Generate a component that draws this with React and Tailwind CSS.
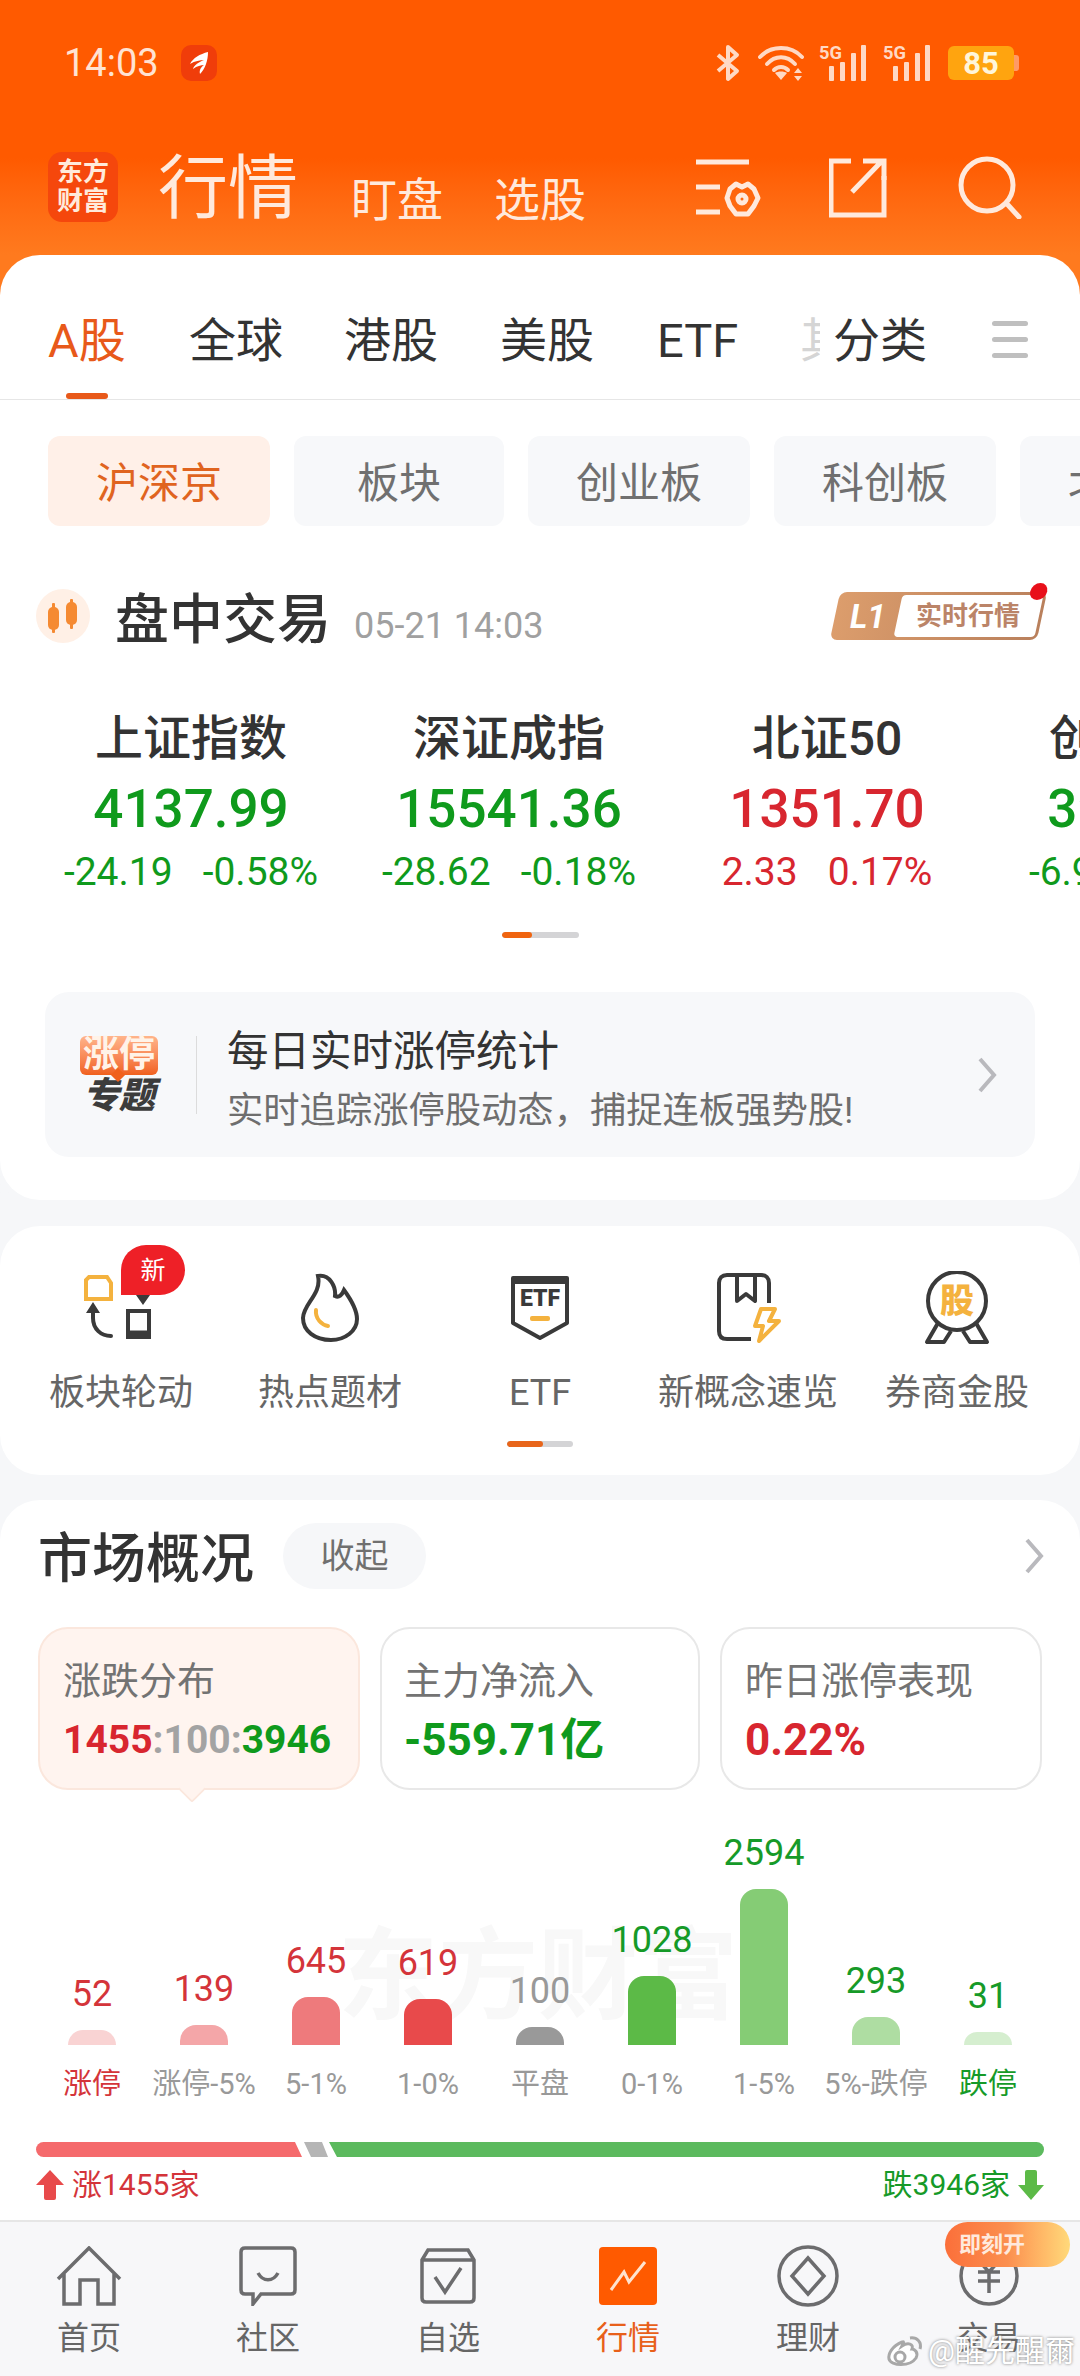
const font = 'font-["Roboto","Noto_Sans_CJK_SC",sans-serif]';

const tabs = [
  { label: 'A股', active: true, w: 'w-[141px]' },
  { label: '全球', w: 'w-[155px]' },
  { label: '港股', w: 'w-[156px]' },
  { label: '美股', w: 'w-[157px]' },
  { label: 'ETF', w: 'w-[143px]' },
];

const chips = [
  { label: '沪深京', active: true, w: 'w-[222px]' },
  { label: '板块', w: 'w-[210px]' },
  { label: '创业板', w: 'w-[222px]' },
  { label: '科创板', w: 'w-[222px]' },
  { label: '北交所', w: 'w-[222px]' },
];

const indexes = [
  { name: '上证指数', value: '4137.99', change: '-24.19', pct: '-0.58%', up: false },
  { name: '深证成指', value: '15541.36', change: '-28.62', pct: '-0.18%', up: false },
  { name: '北证50', value: '1351.70', change: '2.33', pct: '0.17%', up: true },
  { name: '创业板指', value: '3921.47', change: '-6.98', pct: '-0.18%', up: false },
];

const bars = [
  { value: '52', label: '涨停', h: 'h-[15px]', bar: 'bg-[#f9d3d3]', text: 'text-[#d4343a]', labelText: 'text-[#d4343a]' },
  { value: '139', label: '涨停-5%', h: 'h-[20px]', bar: 'bg-[#f4a6a8]', text: 'text-[#d4343a]', labelText: 'text-[#999999]' },
  { value: '645', label: '5-1%', h: 'h-[48px]', bar: 'bg-[#ee7a7c]', text: 'text-[#d4343a]', labelText: 'text-[#999999]' },
  { value: '619', label: '1-0%', h: 'h-[46px]', bar: 'bg-[#e84a4b]', text: 'text-[#d4343a]', labelText: 'text-[#999999]' },
  { value: '100', label: '平盘', h: 'h-[18px]', bar: 'bg-[#999999]', text: 'text-[#999999]', labelText: 'text-[#999999]' },
  { value: '1028', label: '0-1%', h: 'h-[69px]', bar: 'bg-[#5cba47]', text: 'text-[#169a28]', labelText: 'text-[#999999]' },
  { value: '2594', label: '1-5%', h: 'h-[156px]', bar: 'bg-[#85cc75]', text: 'text-[#169a28]', labelText: 'text-[#999999]' },
  { value: '293', label: '5%-跌停', h: 'h-[28px]', bar: 'bg-[#aedda2]', text: 'text-[#169a28]', labelText: 'text-[#999999]' },
  { value: '31', label: '跌停', h: 'h-[13px]', bar: 'bg-[#d5eecf]', text: 'text-[#169a28]', labelText: 'text-[#169a28]' },
];

function StatusBar() {
  return (
    <div className="flex h-[126px] items-center pl-[64px] pr-[66px] text-[#ffe3d2]">
      <span className="text-[38px] leading-none">14:03</span>
      <div className="ml-[22px] flex h-[36px] w-[36px] items-center justify-center rounded-[10px] bg-[#f03d0a]">
        <svg width="22" height="24" viewBox="0 0 22 24" fill="#fff">
          <path d="M20 1 C12 3 5 7 2 13 C7 10 12 9 16 9 C11 11 6 14 5 18 C9 15 13 14 16 14 C13 16 11 19 12 23 C17 18 20 10 20 1Z" />
        </svg>
      </div>
      <div className="ml-auto flex items-center">
        <svg width="26" height="38" viewBox="0 0 26 38" fill="none" stroke="#ffd9c4" strokeWidth="4" strokeLinejoin="round">
          <path d="M3 11 L22 27 L13 35 V3 L22 11 L3 27" />
        </svg>
        <svg className="ml-[16px]" width="50" height="38" viewBox="0 0 50 38" fill="none" stroke="#ffd9c4" strokeWidth="4" strokeLinecap="round">
          <path d="M3 13 C14 1 34 1 45 13" />
          <path d="M10 20 C18 11 30 11 38 20" />
          <path d="M17 26 C21 22 27 22 31 26" />
          <path d="M24 36 L18 29 C21 27 27 27 30 29Z" fill="#ffd9c4" stroke="none" />
          <path d="M41 24 L45 29 H37Z M37 32 H45 L41 37Z" fill="#ffd9c4" stroke="none" />
        </svg>
        <Signal className="ml-[12px]" />
        <Signal className="ml-[16px]" />
        <div className="relative ml-[17px] flex h-[34px] w-[66px] items-center justify-center rounded-[6px] bg-[#ffa40f] text-[31px] font-bold leading-none text-[#fff6d9]">
          85
          <div className="absolute right-[-5px] top-[9px] h-[16px] w-[5px] rounded-r-[3px] bg-[#ff9a66]" />
        </div>
      </div>
    </div>
  );
}

function Signal({ className }) {
  return (
    <svg className={className} width="48" height="38" viewBox="0 0 48 38" fill="#ffd9c4">
      <text x="0" y="15" fontSize="18" fontWeight="700" fontFamily="Roboto" textLength="23" lengthAdjust="spacingAndGlyphs">5G</text>
      <rect x="10" y="22" width="5" height="15" rx="1" />
      <rect x="21" y="18" width="5" height="19" rx="1" />
      <rect x="32" y="9" width="5" height="28" rx="1" />
      <rect x="42" y="1" width="5" height="36" rx="1" />
    </svg>
  );
}

function TopBar() {
  return (
    <div className="flex h-[129px] items-start pl-[48px] pr-[58px] pt-[26px] text-[#ffe9dc]">
      <div className="flex h-[70px] w-[70px] flex-col items-center justify-center rounded-[14px] bg-[#f5470c] text-[26px] font-bold leading-[29px] text-[#ffeadb]">
        <span>东方</span>
        <span>财富</span>
      </div>
      <span className="ml-[40px] mt-[-5px] text-[70px] leading-[84px]">行情</span>
      <span className="ml-[53px] mt-[17px] text-[46px] leading-[62px]">盯盘</span>
      <span className="ml-[51px] mt-[17px] text-[46px] leading-[62px]">选股</span>
      <div className="ml-auto flex items-start">
        <svg width="66" height="60" viewBox="0 0 66 60" fill="none" stroke="#ffe9dc" strokeWidth="5" className="mt-[6px]">
          <path d="M1 4 H54 M1 29 H25 M1 54 H25" />
          <path d="M47 29 L53 26 L59 31 L63 40 L59 48 L53 56 L47 56 L41 56 L35 48 L32 40 L35 31 L41 26Z" strokeLinejoin="round" />
          <circle cx="47" cy="41" r="4" />
        </svg>
        <svg width="58" height="60" viewBox="0 0 58 60" fill="none" stroke="#ffe9dc" strokeWidth="5" className="ml-[68px] mt-[6px]">
          <path d="M22 3 H2 V57 H55 V18" />
          <path d="M23 34 L52 4 M34 3 H55 V22" />
        </svg>
        <svg width="64" height="64" viewBox="0 0 64 64" fill="none" stroke="#ffe9dc" strokeWidth="5" className="ml-[71px] mt-[3px]">
          <circle cx="29" cy="30" r="26" />
          <path d="M50 50 L61 62" strokeLinecap="round" />
        </svg>
      </div>
    </div>
  );
}

function Chevron({ className }) {
  return (
    <svg className={className} width="20" height="36" viewBox="0 0 20 36" fill="none" stroke="#b9b9bd" strokeWidth="4">
      <path d="M3 2 L17 18 L3 34" />
    </svg>
  );
}

function MarketCard() {
  return (
    <div className="h-[945px] overflow-hidden rounded-[40px] bg-white">
      {/* Tabs */}
      <div className="relative flex h-[145px] border-b border-[#e6e6e6] pl-[48px] pt-[58px]">
        {tabs.map((t) => (
          <div key={t.label} className={`${t.w} relative shrink-0 text-[47px] leading-[56px] ${t.active ? 'text-[#e8591a]' : 'text-[#333333]'}`}>
            {t.label}
            {t.active && <div className="absolute left-[18px] top-[80px] h-[6px] w-[42px] rounded-full bg-[#e8591a]" />}
          </div>
        ))}
        <div className="mr-[13px] w-[20px] shrink-0 overflow-hidden whitespace-nowrap text-[47px] leading-[56px] text-[#d5d5d5]">其他</div>
        <div className="text-[47px] leading-[56px] text-[#333333]">分类</div>
        <div className="ml-[65px] mt-[8px] flex h-[37px] w-[36px] flex-col justify-between">
          <div className="h-[5px] rounded-full bg-[#bfbfbf]" />
          <div className="h-[5px] rounded-full bg-[#bfbfbf]" />
          <div className="h-[5px] rounded-full bg-[#bfbfbf]" />
        </div>
      </div>

      {/* Chips */}
      <div className="mt-[36px] flex gap-[24px] overflow-hidden pl-[48px]">
        {chips.map((c) => (
          <div key={c.label} className={`${c.w} flex h-[90px] shrink-0 items-center justify-center rounded-[12px] pt-[5px] text-[42px] ${c.active ? 'bg-[#fff0e8] text-[#e0641f]' : 'bg-[#f7f8fa] text-[#707070]'}`}>
            {c.label}
          </div>
        ))}
      </div>

      {/* Heading */}
      <div className="mt-[64px] flex h-[52px] items-center pl-[36px] pr-[38px]">
        <div className="flex h-[54px] w-[54px] items-center justify-center rounded-full bg-[#fff0e6]">
          <svg width="30" height="34" viewBox="0 0 30 34" fill="#f58a32">
            <rect x="0" y="8" width="11" height="23" rx="5" />
            <rect x="4" y="4" width="3" height="30" rx="1" />
            <rect x="18" y="3" width="11" height="23" rx="5" />
            <rect x="22" y="0" width="3" height="30" rx="1" />
          </svg>
        </div>
        <span className="ml-[25px] mt-[10px] text-[54px] font-medium leading-none text-[#333333]">盘中交易</span>
        <span className="ml-[23px] mt-[20px] text-[36px] leading-none text-[#a0a0a0]">05-21 14:03</span>
        <div className="relative ml-auto flex h-[48px] w-[207px] -skew-x-12 items-center rounded-[7px] bg-gradient-to-r from-[#dc9d6c] to-[#b9805c] p-[3px]">
          <span className="w-[60px] skew-x-12 text-center text-[33px] font-bold italic leading-none text-white">L1</span>
          <span className="flex h-[42px] flex-1 items-center justify-center rounded-[4px] bg-white">
            <span className="skew-x-12 text-[26px] font-bold leading-none text-[#bb8468]">实时行情</span>
          </span>
          <div className="absolute right-[0px] top-[-9px] h-[17px] w-[17px] rounded-full bg-[#e8101a]" />
        </div>
      </div>

      {/* Indexes */}
      <div className="mt-[69px] flex overflow-hidden pl-[32px]">
        {indexes.map((x) => {
          const color = x.up ? 'text-[#d8262f]' : 'text-[#0f9a1c]';
          return (
            <div key={x.name} className="flex w-[318px] shrink-0 flex-col items-center">
              <span className="text-[48px] font-medium leading-[56px] text-[#333333]">{x.name}</span>
              <span className={`mt-[12px] text-[53px] font-medium leading-[60px] ${color}`}>{x.value}</span>
              <div className={`mt-[11px] flex gap-[30px] text-[39px] leading-[44px] ${color}`}>
                <span>{x.change}</span>
                <span>{x.pct}</span>
              </div>
            </div>
          );
        })}
      </div>
      <div className="mx-auto mt-[38px] h-[6px] w-[77px] overflow-hidden rounded-full bg-[#d4d4d6]">
        <div className="h-full w-[30px] rounded-full bg-[#f0640f]" />
      </div>

      {/* Limit-up banner */}
      <div className="mx-[45px] mt-[54px] flex h-[165px] items-center rounded-[24px] bg-[#f7f8fa] pl-[35px] pr-[38px]">
        <div className="flex w-[78px] flex-col items-center">
          <div className="relative h-[39px] w-[78px] rounded-[6px] bg-gradient-to-b from-[#ffb48a] to-[#f0601c] text-center text-[36px] font-bold leading-[39px] text-[#fff3e8]">
            涨停
            <div className="absolute bottom-[-5px] left-[33px] h-[10px] w-[10px] rotate-45 bg-[#f0601c]" />
          </div>
          <div className="mt-[4px] text-[36px] font-black italic leading-[34px] text-[#3c3c3c]">专题</div>
        </div>
        <div className="ml-[38px] h-[78px] w-[1px] bg-[#dcdcdc]" />
        <div className="ml-[30px] flex flex-col pt-[12px]">
          <span className="text-[41.5px] leading-[50px] text-[#333333]">每日实时涨停统计</span>
          <span className="mt-[11px] text-[36.3px] leading-[46px] text-[#6e6e6e]">实时追踪涨停股动态，捕捉连板强势股!</span>
        </div>
        <Chevron className="ml-auto" />
      </div>
    </div>
  );
}

function ToolCard() {
  return (
    <div className="mt-[26px] h-[249px] rounded-[40px] bg-white pt-[40px]">
      <div className="grid grid-cols-[242px_176px_244px_172px_246px]">
        <ToolItem label="板块轮动" badge>
          <svg width="80" height="70" viewBox="0 0 80 70" fill="none" strokeWidth="4">
            <path d="M8 4 H26 L30 10 V26 H5 V7Z" stroke="#f4b23e" />
            <path d="M47 38 H68 V64 H47Z" stroke="#3a3a3a" />
            <path d="M47 60 H68" stroke="#3a3a3a" strokeWidth="5" />
            <path d="M12 35 V45 C12 56 20 63 30 63" stroke="#3a3a3a" strokeLinecap="round" />
            <path d="M12 29 L5 40 H19Z M62 32 L55 22 H69Z" fill="#3a3a3a" />
          </svg>
        </ToolItem>
        <ToolItem label="热点题材">
          <svg width="60" height="70" viewBox="0 0 60 70" fill="none" strokeWidth="4" strokeLinecap="round">
            <path d="M18 3 C30 1 36 14 35 23 C39 25 42 22 44 17 C52 28 57 37 57 46 C57 58 45 67 31 67 C15 67 3 58 3 45 C3 31 22 21 18 3Z" stroke="#3a3a3a" />
            <path d="M16 37 C15 46 22 52 28 53" stroke="#f4b23e" />
          </svg>
        </ToolItem>
        <ToolItem label="ETF">
          <svg width="60" height="66" viewBox="0 0 60 66" fill="none" strokeWidth="4">
            <path d="M3 3 H57 V48 L30 63 L3 48Z" stroke="#3a3a3a" strokeLinejoin="round" />
            <path d="M3 7 H57" stroke="#3a3a3a" />
            <text x="30" y="31" textAnchor="middle" fontSize="23" fontWeight="900" fontFamily="Roboto" fill="#3a3a3a" stroke="none">ETF</text>
            <rect x="20" y="41" width="20" height="5" rx="2" fill="#f4b23e" stroke="none" />
          </svg>
        </ToolItem>
        <ToolItem label="新概念速览">
          <svg width="66" height="70" viewBox="0 0 66 70" fill="none" strokeWidth="4">
            <path d="M54 30 V10 C54 5 51 2 46 2 H12 C7 2 4 5 4 10 V58 C4 64 7 66 12 66 H36" stroke="#3a3a3a" />
            <path d="M22 2 V28 L31 21 L40 28 V2" stroke="#3a3a3a" strokeLinejoin="round" />
            <path d="M46 36 H60 L54 48 H64 L44 68 L48 53 H40Z" stroke="#f4b23e" strokeLinejoin="round" />
          </svg>
        </ToolItem>
        <ToolItem label="券商金股">
          <svg width="66" height="74" viewBox="0 0 66 74" fill="none" strokeWidth="4">
            <circle cx="33" cy="30" r="29" stroke="#3a3a3a" />
            <text x="33" y="42" textAnchor="middle" fontSize="34" fontWeight="900" fontFamily="Noto Sans CJK SC" fill="#f4b23e" stroke="none">股</text>
            <path d="M14 52 L3 71 H20 L27 60 M52 52 L63 71 H46 L39 60" stroke="#3a3a3a" strokeLinejoin="round" />
          </svg>
        </ToolItem>
      </div>
      <div className="mx-auto mt-[25px] h-[6px] w-[66px] overflow-hidden rounded-full bg-[#d4d4d6]">
        <div className="h-full w-[36px] rounded-full bg-[#e8651a]" />
      </div>
    </div>
  );
}

function ToolItem({ label, badge, children }) {
  return (
    <div className="flex flex-col items-center">
      <div className="relative flex h-[84px] w-full items-center justify-center">
        {children}
        {badge && (
          <div className="absolute left-[121px] top-[-21px] flex h-[50px] w-[64px] items-center justify-center rounded-t-[26px] rounded-br-[26px] bg-[#ee2027] text-[25px] leading-none text-white">
            新
          </div>
        )}
      </div>
      <span className="mt-[20px] whitespace-nowrap text-[36px] leading-[46px] text-[#666666]">{label}</span>
    </div>
  );
}

function OverviewCard() {
  return (
    <div className="relative mt-[25px] h-[720px] rounded-t-[40px] bg-white">
      <div className="flex h-[127px] items-start pl-[38px] pr-[36px] pt-[23px]">
        <span className="mt-[3px] text-[54px] font-medium leading-[68px] text-[#333333]">市场概况</span>
        <span className="ml-[29px] flex h-[66px] w-[143px] items-center justify-center rounded-full bg-[#f6f7f9] text-[34px] text-[#707070]">收起</span>
        <Chevron className="ml-auto mt-[15px]" />
      </div>

      <div className="flex gap-[20px] px-[38px]">
        <div className="relative h-[163px] w-[322px] rounded-[30px] border-2 border-[#fbe7dd] bg-[#fff4ef] pl-[23px] pt-[27px]">
          <div className="text-[38px] leading-[50px] text-[#737373]">涨跌分布</div>
          <div className="mt-[9px] text-[39px] font-bold leading-[50px]">
            <span className="text-[#d8262f]">1455</span>
            <span className="text-[#a3a3a3]">:100:</span>
            <span className="text-[#0f9a1c]">3946</span>
          </div>
          <div className="absolute bottom-[-11px] left-[142px] h-[20px] w-[20px] rotate-45 rounded-[3px] border-b-2 border-r-2 border-[#fbe7dd] bg-[#fff4ef]" />
        </div>
        <div className="h-[163px] w-[320px] rounded-[30px] border-2 border-[#e8e8e8] pl-[22px] pt-[27px]">
          <div className="text-[38px] leading-[50px] text-[#737373]">主力净流入</div>
          <div className="mt-[9px] text-[44px] font-bold leading-[50px] text-[#0f9a1c]">-559.71亿</div>
        </div>
        <div className="h-[163px] w-[322px] rounded-[30px] border-2 border-[#e8e8e8] pl-[23px] pt-[27px]">
          <div className="text-[38px] leading-[50px] text-[#737373]">昨日涨停表现</div>
          <div className="mt-[9px] text-[44px] font-bold leading-[50px] text-[#d8262f]">0.22%</div>
        </div>
      </div>

      {/* Distribution chart */}
      <div className="relative mt-[39px] h-[195px] pl-[36px]">
        <div className="pointer-events-none absolute left-[338px] top-[88px] whitespace-nowrap text-[100px] font-bold leading-[120px] text-[#f8f8f8]">东方财富</div>
        <div className="relative grid h-full grid-cols-[repeat(9,112px)] items-end">
          {bars.map((b) => (
            <div key={b.label} className="flex flex-col items-center">
              <span className={`${b.text} mb-[12px] text-[36px] leading-[48px]`}>{b.value}</span>
              <div className={`${b.h} ${b.bar} w-[48px] rounded-t-[16px]`} />
            </div>
          ))}
        </div>
      </div>
      <div className="mt-[40px] grid grid-cols-[repeat(9,112px)] pl-[36px]">
        {bars.map((b) => (
          <span key={b.label} className={`${b.labelText} whitespace-nowrap text-center text-[29px] leading-[40px]`}>{b.label}</span>
        ))}
      </div>

      {/* Rise / fall ratio */}
      <div className="mx-[36px] mt-[38px] flex h-[15px]">
        <div className="w-[266px] rounded-l-full bg-[#f56a6c] [clip-path:polygon(0_0,259px_0,100%_100%,0_100%)]" />
        <div className="ml-[2px] w-[24px] bg-[#b5b5b5] [clip-path:polygon(0_0,18px_0,100%_100%,7px_100%)]" />
        <div className="ml-[1px] flex-1 rounded-r-full bg-[#5cba5e] [clip-path:polygon(0_0,100%_0,100%_100%,8px_100%)]" />
      </div>
      <div className="mt-[8px] flex items-center justify-between px-[36px] text-[30px] leading-[40px]">
        <div className="flex items-center text-[#d4343a]">
          <svg width="28" height="30" viewBox="0 0 28 30" fill="#e84a4b">
            <path d="M14 0 L28 15 H20 V28 Q20 30 18 30 H10 Q8 30 8 28 V15 H0Z" />
          </svg>
          <span className="ml-[8px]">涨1455家</span>
        </div>
        <div className="flex items-center text-[#169a28]">
          <span className="mr-[8px]">跌3946家</span>
          <svg width="26" height="30" viewBox="0 0 26 30" fill="#5cba47">
            <path d="M13 30 L26 15 H19 V2 Q19 0 17 0 H9 Q7 0 7 2 V15 H0Z" />
          </svg>
        </div>
      </div>
    </div>
  );
}

function BottomNav() {
  const stroke = { fill: 'none', stroke: '#6c6c6e', strokeWidth: 3.5 };
  const items = [
    {
      label: '首页',
      icon: (
        <svg width="66" height="60" viewBox="0 0 66 60" {...stroke}>
          <path d="M2 33 L33 2 L64 33 M8 28 V58 H24 V34 H42 V58 H58 V28" />
        </svg>
      ),
    },
    {
      label: '社区',
      icon: (
        <svg width="58" height="60" viewBox="0 0 58 60" {...stroke}>
          <path d="M6 2 H52 Q56 2 56 6 V44 Q56 48 52 48 H22 L14 58 V48 H6 Q2 48 2 44 V6 Q2 2 6 2Z" />
          <path d="M19 27 C24 36 34 36 39 27" />
        </svg>
      ),
    },
    {
      label: '自选',
      icon: (
        <svg width="56" height="56" viewBox="0 0 56 56" {...stroke}>
          <path d="M2 12 L8 2 H48 L54 12 V50 Q54 54 50 54 H6 Q2 54 2 50Z M2 12 H54" />
          <path d="M15 29 L25 44 L41 20" />
        </svg>
      ),
    },
    {
      label: '行情',
      active: true,
      icon: (
        <div className="flex h-[58px] w-[58px] items-center justify-center rounded-[4px] bg-[#ff5a00]">
          <svg width="38" height="32" viewBox="0 0 38 32" fill="none" stroke="#ffe3cf" strokeWidth="3">
            <path d="M2 30 L15 12 L20 22 L36 2" />
          </svg>
        </div>
      ),
    },
    {
      label: '理财',
      icon: (
        <svg width="62" height="62" viewBox="0 0 62 62" {...stroke}>
          <circle cx="31" cy="31" r="29" />
          <path d="M31 13 L47 31 L31 49 L15 31Z" />
        </svg>
      ),
    },
    {
      label: '交易',
      icon: (
        <svg width="60" height="60" viewBox="0 0 60 60" {...stroke}>
          <circle cx="30" cy="30" r="28" />
          <path d="M19 26 H41 M19 35 H41 M30 26 V47 M22 17 L30 26 L38 17" />
        </svg>
      ),
    },
  ];

  return (
    <div className="relative h-[157px] border-t-2 border-[#e6e6e6] bg-[#f7f7f9]">
      <div className="grid grid-cols-[178px_180px_180px_180px_180px_182px] pt-[23px]">
        {items.map((it) => (
          <div key={it.label} className="flex flex-col items-center">
            <div className="flex h-[62px] items-center justify-center">{it.icon}</div>
            <span className={`mt-[11px] text-[32px] leading-[40px] ${it.active ? 'text-[#e8601a]' : 'text-[#666666]'}`}>{it.label}</span>
          </div>
        ))}
      </div>
      <div className="absolute left-[945px] top-0 flex h-[45px] w-[125px] items-center rounded-full bg-gradient-to-r from-[#fb6f3a] via-[#fb8f4f] to-[#ffd97a] pl-[14px] text-[22px] font-bold leading-none text-[#ffe9dc]">
        即刻开
      </div>
      <div className="absolute left-[886px] top-[112px] flex items-center text-[30px] leading-none text-white [text-shadow:0_0_3px_#777777]">
        <svg width="38" height="34" viewBox="0 0 38 34" fill="none" strokeWidth="3">
          <path d="M16 8 C6 12 2 20 3 25 C5 32 24 33 30 24 C33 18 28 15 26 15 C28 10 22 8 16 12 C18 8 18 7 16 8Z" stroke="#a8a8a8" fill="#ffffff" />
          <circle cx="14" cy="23" r="5" stroke="#a8a8a8" />
          <path d="M24 4 C31 3 36 8 34 15" stroke="#a8a8a8" />
        </svg>
        <span className="ml-[4px]">@醒先醒爾</span>
      </div>
    </div>
  );
}

export default function App() {
  return (
    <div className={`h-[2376px] w-[1080px] overflow-hidden bg-[#f6f7f9] ${font}`}>
      <div className="bg-gradient-to-b from-[#ff5a00] from-[62%] to-[#ff7a1e]">
        <StatusBar />
        <TopBar />
      </div>
      <div className="bg-gradient-to-b from-[#ff7a1e] from-[8%] to-[#f6f7f9] to-[8%]">
        <MarketCard />
      </div>
      <ToolCard />
      <OverviewCard />
      <BottomNav />
    </div>
  );
}
